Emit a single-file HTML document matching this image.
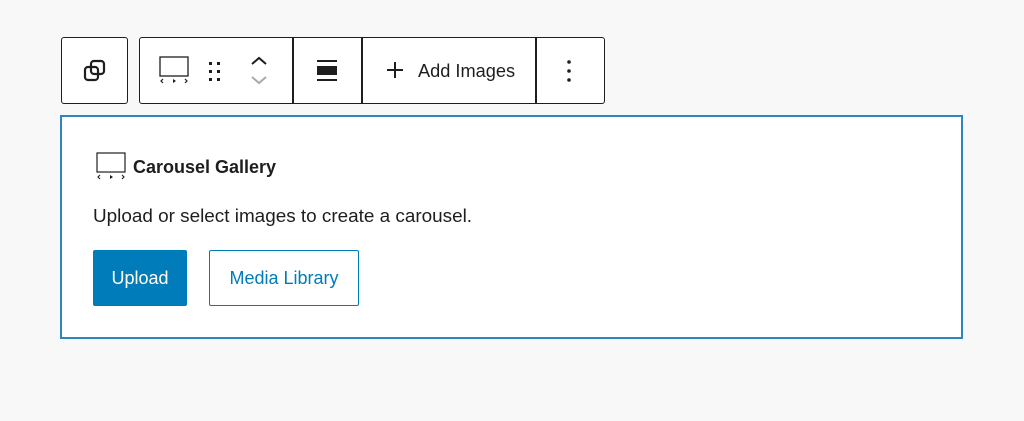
<!DOCTYPE html>
<html><head><style>
body{margin:0;width:1024px;height:421px;background:#f8f8f8;font-family:"Liberation Sans",sans-serif;position:relative;overflow:hidden;color:#1e1e1e}
.box{position:absolute;border:1.5px solid #1e1e1e;border-radius:3px;background:#fff;box-sizing:border-box}
.div{position:absolute;top:0;bottom:0;width:1.5px;background:#1e1e1e}
.ph{position:absolute;left:60px;top:115px;width:903px;height:224px;border:2px solid #2d86c0;box-sizing:border-box;background:#fff}
.btn{position:absolute;box-sizing:border-box;font-size:18px;display:flex;align-items:center;justify-content:center;border-radius:2px}
</style></head><body>
<div class="box" style="left:61px;top:37px;width:67px;height:67px">
<svg style="position:absolute;left:19px;top:19px" width="28" height="28" viewBox="0 0 28 28" fill="none" stroke="#1e1e1e" stroke-width="2.2"><rect x="4" y="10" width="13" height="13" rx="3"/><rect x="10" y="4" width="13" height="13" rx="3"/></svg>
</div>
<div class="box" style="left:139px;top:37px;width:466px;height:67px">
<svg style="position:absolute;left:18px;top:17px" width="32" height="32" viewBox="0 0 32 32" fill="none" stroke="#1e1e1e"><rect x="2" y="2" width="28" height="19" stroke-width="1.3"/><path d="M5 24l-2 2 2 2M27 24l2 2-2 2" stroke-width="1.2"/><path d="M15 24l3 2-3 2z" fill="#1e1e1e" stroke="none"/></svg>
<svg style="position:absolute;left:67px;top:22px" width="16" height="22" fill="#1e1e1e"><rect x="2" y="2" width="3" height="3"/><rect x="10" y="2" width="3" height="3"/><rect x="2" y="10" width="3" height="3"/><rect x="10" y="10" width="3" height="3"/><rect x="2" y="18" width="3" height="3"/><rect x="10" y="18" width="3" height="3"/></svg>
<svg style="position:absolute;left:108px;top:14px" width="22" height="36" fill="none" stroke-width="2"><path d="M4 12l7-6 7 6" stroke="#1e1e1e"/><path d="M4 25l7 6 7-6" stroke="#aaa"/></svg>
<div class="div" style="left:152px"></div>
<svg style="position:absolute;left:176px;top:21px" width="22" height="24"><rect x="1" y="1" width="20" height="2" fill="#1e1e1e"/><rect x="1" y="7" width="20" height="9" fill="#1e1e1e"/><rect x="1" y="20" width="20" height="2" fill="#1e1e1e"/></svg>
<div class="div" style="left:221px"></div>
<svg style="position:absolute;left:246px;top:23px" width="18" height="18" stroke="#1e1e1e" stroke-width="2"><path d="M9 1v16M1 9h16"/></svg>
<div style="position:absolute;left:278px;top:23px;font-size:18.2px">Add Images</div>
<div class="div" style="left:395px"></div>
<svg style="position:absolute;left:426px;top:20px" width="6" height="26" fill="#1e1e1e"><circle cx="3" cy="4" r="1.8"/><circle cx="3" cy="13" r="1.8"/><circle cx="3" cy="22" r="1.8"/></svg>
</div>
<div class="ph">
<svg style="position:absolute;left:33px;top:35px" width="32" height="30" viewBox="0 0 32 30" fill="none" stroke="#1e1e1e"><rect x="2" y="1" width="28" height="19" stroke-width="1.2"/><path d="M5 23l-2 2 2 2M27 23l2 2-2 2" stroke-width="1.1"/><path d="M15 23l3 2-3 2z" fill="#1e1e1e" stroke="none"/></svg>
<div style="position:absolute;left:71px;top:40px;font-size:18px;font-weight:bold">Carousel Gallery</div>
<div style="position:absolute;left:31px;top:89px;font-size:18.9px">Upload or select images to create a carousel.</div>
</div>
<div class="btn" style="left:93px;top:250px;width:94px;height:56px;background:#007cba;color:#fff">Upload</div>
<div class="btn" style="left:209px;top:250px;width:150px;height:56px;border:1.5px solid #007cba;color:#007cba;background:#fff">Media Library</div>
</body></html>
